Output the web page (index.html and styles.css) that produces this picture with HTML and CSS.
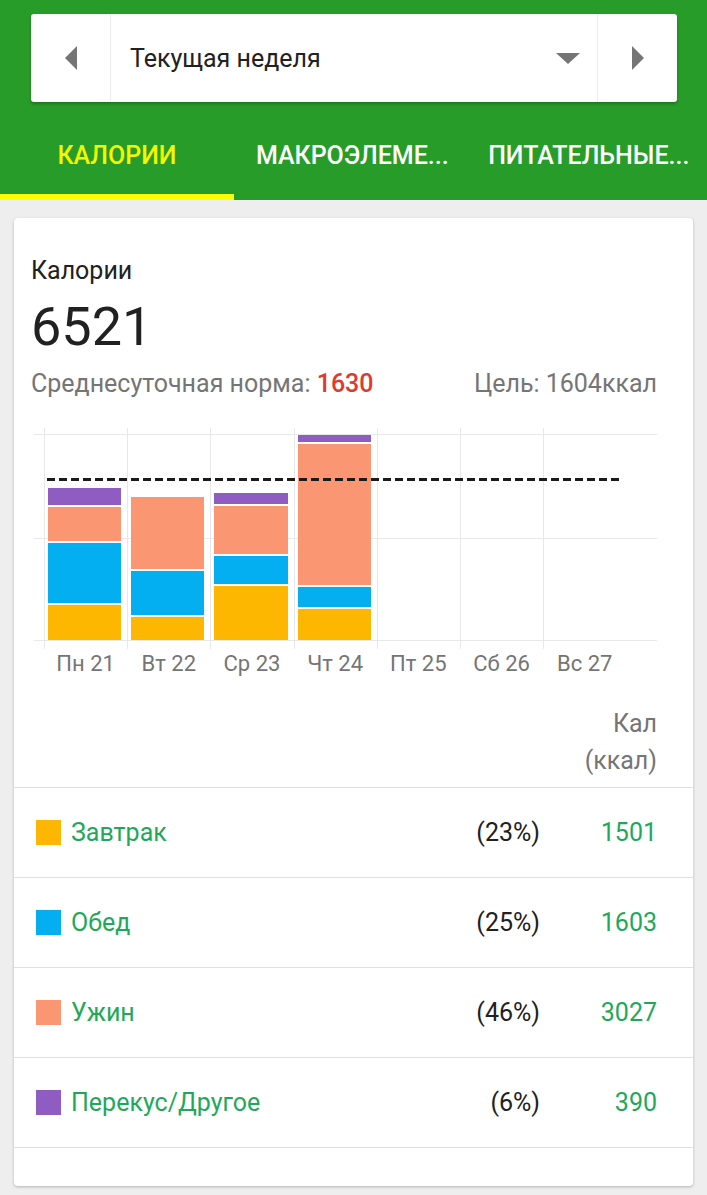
FILE: index.html
```html
<!DOCTYPE html>
<html lang="ru">
<head>
    <meta charset="UTF-8">
    <meta name="viewport" content="width=device-width, initial-scale=1.0">
    <title>Калории</title>
    <link rel="stylesheet" href="styles.css">
</head>
<body>
    <header class="top">
        <div class="week-picker">
            <button class="nav-btn prev" aria-label="Назад">
                <svg width="14" height="26" viewBox="0 0 14 26"><polygon points="13,1 13,25 1,13" fill="#757575"/></svg>
            </button>
            <div class="week-select">
                <span>Текущая неделя</span>
                <svg class="caret" width="24" height="12" viewBox="0 0 24 12"><polygon points="0,0 24,0 12,11" fill="#757575"/></svg>
            </div>
            <button class="nav-btn next" aria-label="Вперёд">
                <svg width="14" height="26" viewBox="0 0 14 26"><polygon points="1,1 1,25 13,13" fill="#757575"/></svg>
            </button>
        </div>
        <nav class="tabs">
            <a class="tab active">КАЛОРИИ</a>
            <a class="tab">МАКРОЭЛЕМЕ...</a>
            <a class="tab">ПИТАТЕЛЬНЫЕ...</a>
        </nav>
    </header>

    <main>
        <section class="card">
            <div class="summary">
                <div class="title">Калории</div>
                <div class="total">6521</div>
                <div class="stats">
                    <span>Среднесуточная норма: <b class="avg">1630</b></span>
                    <span>Цель: 1604ккал</span>
                </div>
            </div>

            <div class="chart">
                <div class="hlines"></div>
                <div class="goal-line"></div>
                <div class="cols">
                    <div class="col">
                        <div class="plot">
                            <div class="bar">
                                <i class="seg breakfast" style="height:35px"></i>
                                <i class="seg lunch" style="height:60px"></i>
                                <i class="seg dinner" style="height:34px"></i>
                                <i class="seg snack" style="height:17px"></i>
                            </div>
                        </div>
                        <div class="day">Пн 21</div>
                    </div>
                    <div class="col">
                        <div class="plot">
                            <div class="bar">
                                <i class="seg breakfast" style="height:23px"></i>
                                <i class="seg lunch" style="height:44px"></i>
                                <i class="seg dinner" style="height:72px"></i>
                            </div>
                        </div>
                        <div class="day">Вт 22</div>
                    </div>
                    <div class="col">
                        <div class="plot">
                            <div class="bar">
                                <i class="seg breakfast" style="height:54px"></i>
                                <i class="seg lunch" style="height:28px"></i>
                                <i class="seg dinner" style="height:48px"></i>
                                <i class="seg snack" style="height:11px"></i>
                            </div>
                        </div>
                        <div class="day">Ср 23</div>
                    </div>
                    <div class="col">
                        <div class="plot">
                            <div class="bar">
                                <i class="seg breakfast" style="height:31px"></i>
                                <i class="seg lunch" style="height:20px"></i>
                                <i class="seg dinner" style="height:141px"></i>
                                <i class="seg snack" style="height:7px"></i>
                            </div>
                        </div>
                        <div class="day">Чт 24</div>
                    </div>
                    <div class="col">
                        <div class="plot"></div>
                        <div class="day">Пт 25</div>
                    </div>
                    <div class="col">
                        <div class="plot"></div>
                        <div class="day">Сб 26</div>
                    </div>
                    <div class="col">
                        <div class="plot"></div>
                        <div class="day">Вс 27</div>
                    </div>
                </div>
            </div>

            <div class="table-head">Кал<br>(ккал)</div>

            <ul class="meals">
                <li class="meal">
                    <span class="swatch breakfast"></span>
                    <span class="meal-name">Завтрак</span>
                    <span class="pct">(23%)</span>
                    <span class="kcal">1501</span>
                </li>
                <li class="meal">
                    <span class="swatch lunch"></span>
                    <span class="meal-name">Обед</span>
                    <span class="pct">(25%)</span>
                    <span class="kcal">1603</span>
                </li>
                <li class="meal">
                    <span class="swatch dinner"></span>
                    <span class="meal-name">Ужин</span>
                    <span class="pct">(46%)</span>
                    <span class="kcal">3027</span>
                </li>
                <li class="meal">
                    <span class="swatch snack"></span>
                    <span class="meal-name">Перекус/Другое</span>
                    <span class="pct">(6%)</span>
                    <span class="kcal">390</span>
                </li>
            </ul>
        </section>
    </main>
</body>
</html>
```

FILE: styles.css
```css
body {
    font-family: Roboto, "Noto Sans", sans-serif;
    margin: 0;
    padding: 0;
    background-color: #eeeeee;
    color: #212121;
}
.top {
    background-color: #289c28;
    padding: 14px 0 0;
}
.week-picker {
    display: flex;
    height: 88px;
    margin: 0 30px 0 31px;
    background-color: #fff;
    border-radius: 3px;
    box-shadow: 0 2px 3px rgba(0, 0, 0, 0.25);
}
.nav-btn {
    width: 80px;
    border: none;
    background: none;
    padding: 0;
    display: flex;
    align-items: center;
    justify-content: center;
    cursor: pointer;
}
.nav-btn.prev {
    border-right: 1px solid #ececec;
}
.nav-btn.next {
    border-left: 1px solid #ececec;
}
.week-select {
    flex: 1;
    display: flex;
    align-items: center;
    justify-content: space-between;
    padding: 0 17px 0 19px;
    font-size: 25px;
}
.caret {
    margin-top: 2px;
}
.tabs {
    display: grid;
    grid-template-columns: 234px 1fr 1fr;
    height: 98px;
}
.tab {
    display: flex;
    align-items: center;
    justify-content: center;
    padding-top: 14px;
    font-size: 25px;
    font-weight: 500;
    color: #fff;
    border-bottom: 6px solid transparent;
    white-space: nowrap;
}
.tab.active {
    color: #f6f600;
    border-bottom-color: #ffff00;
}
main {
    padding: 18px 14px 10px;
}
.card {
    background-color: #fff;
    border-radius: 4px;
    box-shadow: 0 1px 3px rgba(0, 0, 0, 0.25);
    padding-bottom: 38px;
}
.summary {
    padding: 38px 36px 0 17px;
}
.title {
    font-size: 25px;
    line-height: 30px;
}
.total {
    font-size: 54px;
    line-height: 82px;
}
.stats {
    display: flex;
    justify-content: space-between;
    font-size: 25px;
    line-height: 32px;
    color: #757575;
}
.avg {
    color: #e0392f;
    font-weight: 500;
}
.chart {
    position: relative;
    margin: 28px 36px 0 20px;
}
.hlines {
    position: absolute;
    left: 0;
    right: 0;
    top: 6px;
    height: 205px;
    border-top: 1px solid #e8e8e8;
    border-bottom: 1px solid #e8e8e8;
    background: linear-gradient(#e8e8e8, #e8e8e8) 0 103px / 100% 1px no-repeat;
}
.goal-line {
    position: absolute;
    left: 13px;
    top: 50px;
    width: 574px;
    height: 3px;
    background: repeating-linear-gradient(90deg, #1a1a1a 0 8px, transparent 8px 12px);
    z-index: 2;
}
.cols {
    position: relative;
    display: grid;
    grid-template-columns: repeat(7, 83.2px);
    margin-left: 10px;
}
.plot {
    height: 212px;
    padding-bottom: 9px;
    border-left: 1px solid #e8e8e8;
    display: flex;
    align-items: flex-end;
}
.bar {
    flex: 1;
    margin: 0 6px 0 3px;
    display: flex;
    flex-direction: column-reverse;
    gap: 2px;
}
.bar .seg {
    display: block;
}
.breakfast { background-color: #fdb701; }
.lunch { background-color: #03aff0; }
.dinner { background-color: #fb9672; }
.snack { background-color: #8f5dc2; }
.day {
    text-align: center;
    font-size: 22px;
    line-height: 30px;
    color: #757575;
}
.table-head {
    margin-top: 26px;
    padding: 0 36px 8px 0;
    text-align: right;
    font-size: 25px;
    line-height: 37px;
    color: #757575;
}
.meals {
    list-style: none;
    margin: 0;
    padding: 0;
    border-top: 1px solid #e0e0e0;
}
.meal {
    display: flex;
    align-items: center;
    height: 89px;
    padding: 0 36px 0 22px;
    border-bottom: 1px solid #e0e0e0;
    font-size: 25px;
}
.swatch {
    width: 25px;
    height: 25px;
    margin-right: 10px;
}
.meal-name {
    flex: 1;
    color: #1fa85a;
}
.pct {
    color: #212121;
}
.kcal {
    width: 117px;
    text-align: right;
    color: #1fa85a;
}
```
